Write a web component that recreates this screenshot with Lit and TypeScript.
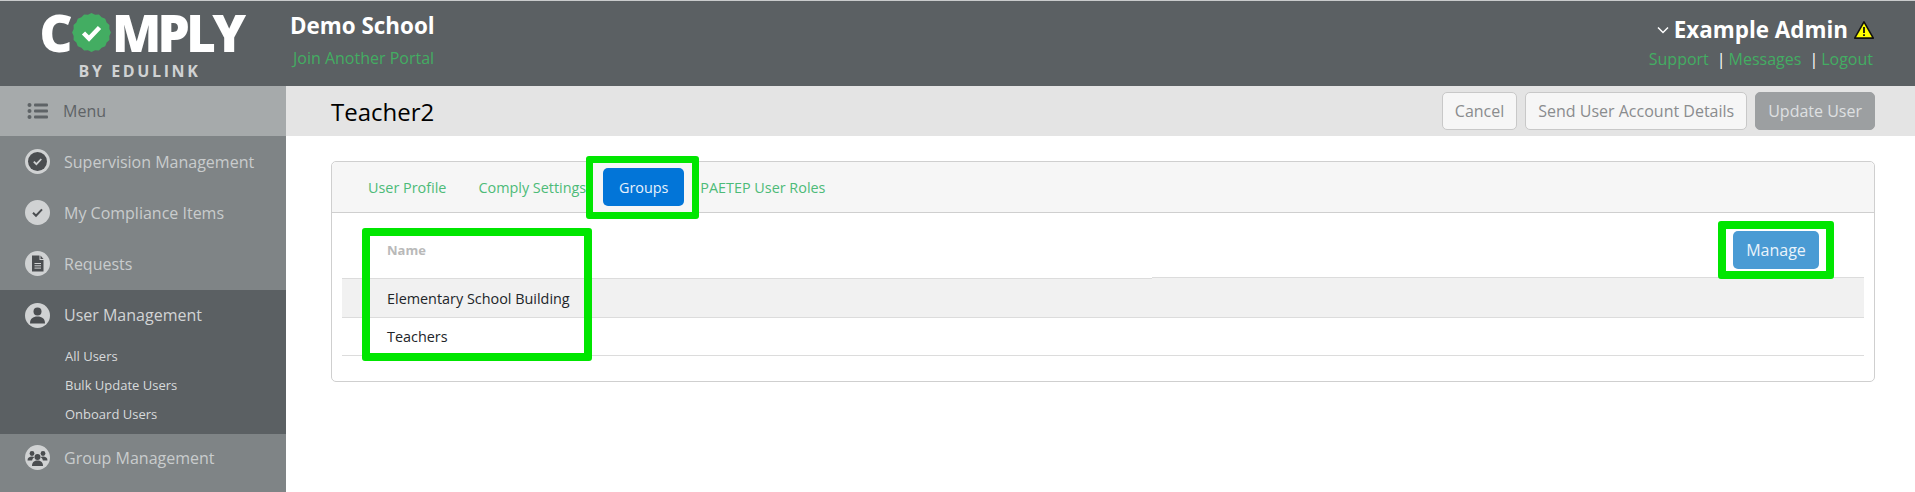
import { LitElement, html, css, svg } from "lit";
import { customElement } from "lit/decorators.js";

const D = "#4a4d50";
const L = "#d0d2d3";
const icons: Record<string, unknown> = {
  sup: svg`<circle cx="12.5" cy="12.5" r="9.5" fill="${D}"/><path d="M8.8 12.6l2.6 2.6 4.9-5.2" fill="none" stroke="${L}" stroke-width="1.8"/>`,
  comp: svg`<path d="M8 12.8l3 3 6-6.4" fill="none" stroke="${D}" stroke-width="2"/>`,
  req: svg`<path d="M7 4.500h7.500v4.500H18.500V20.500H7z" fill="${D}"/><path d="M15.500 4.500L18.500 8h-3z" fill="${D}"/><path d="M9.500 12.500h6.500M9.500 14.800h6.500M9.500 17.100h6.500" stroke="${L}" stroke-width="1"/>`,
  user: svg`<circle cx="12.5" cy="8.5" r="4" fill="${D}"/><path d="M5 20.500c0-5 3-7 7.500-7s7.500 2 7.500 7z" fill="${D}"/>`,
  group: svg`<circle cx="7" cy="8.500" r="2.400" fill="${D}"/><circle cx="18" cy="8.500" r="2.400" fill="${D}"/><circle cx="12.500" cy="12" r="3" fill="${D}"/><path d="M2.500 15.500c0-3 2-4 4.500-4 1 0 1.700.3 2.300.7-1.500 1-2 2-2.200 3.300zM22.500 15.500c0-3-2-4-4.500-4-1 0-1.700.3-2.300.7 1.500 1 2 2 2.200 3.300z" fill="${D}"/><path d="M7 21c0-4 2.500-5.500 5.500-5.500S18 17 18 21z" fill="${D}"/>`,
};

// scalloped seal of the logo
const seal = (() => {
  const pts: string[] = [];
  const n = 32;
  for (let i = 0; i < n; i++) {
    const a = (i / n) * Math.PI * 2;
    const r = i % 2 ? 18.2 : 19.4;
    pts.push(`${(19.5 + r * Math.cos(a)).toFixed(2)},${(19.5 + r * Math.sin(a)).toFixed(2)}`);
  }
  return pts.join(" ");
})();

@customElement("app-root")
export class AppRoot extends LitElement {
  static styles = css`
    :host { display: block; width: 1915px; height: 492px; overflow: hidden; font-family: "Open Sans", "Liberation Sans", sans-serif; background: #fff; color: #000; }
    .top { height: 85px; margin-top: 1px; background: #5b6063; display: flex; box-shadow: 0 -1px 0 #c9cbcc; }
    .logo { width: 286px; flex: none; display: flex; flex-direction: column; align-items: center; color: #fff; box-sizing: border-box; padding: 4px 0 0 0; }
    .word { display: flex; align-items: center; height: 54px; font-size: 51px; font-weight: 800; line-height: 54px; letter-spacing: -3.6px; margin-right: 4px; }
    .word svg { margin: 0 1px 0 3px; flex: none; }
    .by { font-size: 16px; font-weight: 700; letter-spacing: 2.6px; color: #d0d2d3; line-height: 18px; margin: 3px 7px 0 0; }
    .school { padding: 9px 0 0 4px; flex: 1; }
    .school b { display: block; color: #fff; font-size: 22.4px; line-height: 32px; font-weight: 700; }
    .school a { display: block; margin-left: 3px; color: #43ad62; font-size: 16px; line-height: 24px; margin-top: 4px; }
    .acct { padding: 12px 42px 0 0; display: flex; flex-direction: column; align-items: flex-end; }
    .acct .me { display: flex; align-items: center; color: #fff; font-size: 22.4px; font-weight: 700; line-height: 34px; }
    .chev { margin-right: 5px; flex: none; }
    .warn { margin: 0 -1px 0 6px; flex: none; }
    .links { color: #fff; font-size: 16px; line-height: 24px; display: flex; }
    .links a { color: #43ad62; }
    .links .sep { margin: 0 3px 0 8px; }
    .body { display: flex; height: 406px; }
    .side { width: 286px; flex: none; background: #7f8486; }
    .menu { height: 50px; background: #a6aaab; color: #5e6366; font-size: 16px; display: flex; align-items: center; padding-left: 27px; gap: 15px; }
    .item { height: 51px; display: flex; align-items: center; gap: 14px; padding-left: 25px; color: #c9cccd; font-size: 16px; }
    .ic { width: 25px; height: 25px; flex: none; }
    .active { background: #5b6063; height: 144px; margin-top: 1px; }
    .active .item { color: #d2d4d5; height: 50px; }
    .after { height: 47px; }
    .sub { padding-left: 65px; display: flex; flex-direction: column; margin-top: 2px; }
    .sub a { color: #d8dadb; font-size: 13px; line-height: 29px; }
    .main { flex: 1; min-width: 0; }
    .bar { height: 50px; background: #e4e4e4; display: flex; align-items: center; padding: 0 40px 0 45px; gap: 8px; }
    .bar h1 { font-size: 24px; font-weight: 400; margin: 0; flex: 1; color: #000; }
    .btn { height: 38px; box-sizing: border-box; border: 1px solid #c8c8c8; border-radius: 5px; background: #f6f6f6; color: #8a8c8e; font-size: 16px; padding: 0 12px; display: flex; align-items: center; }
    .btn.prim { background: #9c9fa1; border-color: #9c9fa1; color: #dfe0e1; }
    .content { padding: 25px 40px 0 45px; }
    .card { height: 221px; box-sizing: border-box; border: 1px solid #cfcfcf; border-radius: 5px; }
    .tabs { height: 51px; box-sizing: border-box; background: #f6f6f6; border-bottom: 1px solid #cfcfcf; border-radius: 5px 5px 0 0; display: flex; align-items: center; padding-left: 36px; font-size: 14.4px; color: #4dbb78; }
    .tabs .t2 { margin-left: 32px; }
    .tabs .t3 { margin-left: 17px; background: #0275d8; color: #e8f2fb; width: 81px; height: 38px; border-radius: 5px; display: flex; align-items: center; justify-content: center; position: relative; }
    .tabs .t4 { margin-left: 16px; }
    .mark { position: absolute; border: 7px solid #00e600; border-radius: 3px; pointer-events: none; }
    .t3 .mark { inset: -12px -15px -13px -17px; }
    .tbl { margin: 0 10px; position: relative; }
    .head { display: flex; height: 66px; }
    .head .l { width: 810px; box-sizing: border-box; border-bottom: 1px solid #dcdcdc; height: 66px; padding: 28px 0 0 45px; font-size: 13px; font-weight: 700; color: #b9b9b9; line-height: 18px; }
    .head .r { flex: 1; box-sizing: border-box; border-bottom: 1px solid #dcdcdc; height: 65px; box-shadow: 0 1px 0 #f1f1f1; display: flex; justify-content: flex-end; padding: 18px 45px 0 0; }
    .manage { width: 86px; height: 38px; background: #4a9bd4; color: #eaf4fb; border-radius: 5px; font-size: 16px; display: flex; align-items: center; justify-content: center; position: relative; }
    .manage .mark { inset: -10px -15px -10px -15px; border-width: 8px; }
    .row { height: 38px; box-sizing: border-box; border-bottom: 1px solid #dcdcdc; padding-left: 45px; display: flex; align-items: center; font-size: 14.4px; color: #212529; }
    .row.alt { background: #f1f1f1; height: 39px; }
    .namebox { left: 20px; top: 15px; width: 214px; height: 117px; border-width: 8px; }
  `;

  private icon(k: string) {
    return html`<svg class="ic" viewBox="0 0 25 25"><circle cx="12.5" cy="12.5" r="12.5" fill="${L}"/>${icons[k]}</svg>`;
  }

  render() {
    return html`
      <div class="top">
        <div class="logo">
          <div class="word">C<svg width="39" height="39" viewBox="0 0 39 39"><polygon points="${seal}" fill="#43ad62"/><path d="M11.5 20l5.500 5.500 10.500-11" fill="none" stroke="#fff" stroke-width="4.500"/></svg>MPLY</div>
          <div class="by">BY EDULINK</div>
        </div>
        <div class="school"><b>Demo School</b><a>Join Another Portal</a></div>
        <div class="acct">
          <div class="me">
            <svg class="chev" width="12" height="8" viewBox="0 0 12 8"><path d="M1 1.500l5 5 5-5" fill="none" stroke="#fff" stroke-width="1.500"/></svg>
            Example Admin
            <svg class="warn" width="20" height="18" viewBox="0 0 20 18"><path d="M10 .9L19.300 17.100H.7z" fill="#ffff00" stroke="#111" stroke-width="1.600" stroke-linejoin="round"/><path d="M10 6v6M10 13.200v1.800" stroke="#111" stroke-width="1.800"/></svg>
          </div>
          <div class="links"><a>Support</a><span class="sep">|</span><a>Messages</a><span class="sep">|</span><a>Logout</a></div>
        </div>
      </div>
      <div class="body">
        <div class="side">
          <div class="menu">
            <svg width="21" height="18" viewBox="0 0 21 18"><g fill="#5e6366"><circle cx="2.5" cy="3" r="2"/><circle cx="2.5" cy="9" r="2"/><circle cx="2.5" cy="15" r="2"/><rect x="7" y="1.500" width="14" height="3" rx="1"/><rect x="7" y="7.500" width="14" height="3" rx="1"/><rect x="7" y="13.500" width="14" height="3" rx="1"/></g></svg>
            <span>Menu</span>
          </div>
          <div class="item">${this.icon("sup")}<span>Supervision Management</span></div>
          <div class="item">${this.icon("comp")}<span>My Compliance Items</span></div>
          <div class="item">${this.icon("req")}<span>Requests</span></div>
          <div class="active">
            <div class="item">${this.icon("user")}<span>User Management</span></div>
            <div class="sub"><a>All Users</a><a>Bulk Update Users</a><a>Onboard Users</a></div>
          </div>
          <div class="item after">${this.icon("group")}<span>Group Management</span></div>
        </div>
        <div class="main">
          <div class="bar">
            <h1>Teacher2</h1>
            <div class="btn">Cancel</div>
            <div class="btn">Send User Account Details</div>
            <div class="btn prim">Update User</div>
          </div>
          <div class="content">
            <div class="card">
              <div class="tabs">
                <span>User Profile</span>
                <span class="t2">Comply Settings</span>
                <span class="t3">Groups<i class="mark"></i></span>
                <span class="t4">PAETEP User Roles</span>
              </div>
              <div class="tbl">
                <div class="head">
                  <div class="l">Name</div>
                  <div class="r"><div class="manage">Manage<i class="mark"></i></div></div>
                </div>
                <div class="row alt">Elementary School Building</div>
                <div class="row">Teachers</div>
                <i class="mark namebox"></i>
              </div>
            </div>
          </div>
        </div>
      </div>
    `;
  }
}
